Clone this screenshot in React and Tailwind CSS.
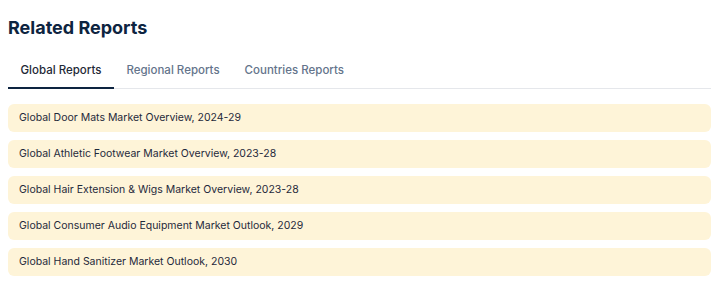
const reports = [
  "Global Door Mats Market Overview, 2024-29",
  "Global Athletic Footwear Market Overview, 2023-28",
  "Global Hair Extension & Wigs Market Overview, 2023-28",
  "Global Consumer Audio Equipment Market Outlook, 2029",
  "Global Hand Sanitizer Market Outlook, 2030",
];

const tabs = ["Global Reports", "Regional Reports", "Countries Reports"];

export default function App() {
  return (
    <div className="bg-white pl-2 pr-4 pt-4 font-['Inter','Liberation_Sans',sans-serif]">
      <h2 className="text-[18px] font-bold leading-6 text-[#0d2440]">Related Reports</h2>
      <div className="mt-[22px] flex border-b border-[#e5e7eb]">
        {tabs.map((t, i) => (
          <button
            key={t}
            className={
              i === 0
                ? "-mb-px border-b-2 border-[#0d2440] px-[12.5px] pb-[9px] text-[11.5px] font-medium leading-4 text-[#1f2937]"
                : "-mb-px border-b-2 border-transparent px-[12.5px] pb-[9px] text-[11.5px] font-medium leading-4 text-[#64748b]"
            }
          >
            {t}
          </button>
        ))}
      </div>
      <div className="mt-[15px] flex flex-col gap-2">
        {reports.map((r) => (
          <div key={r} className="flex h-7 items-center rounded-md bg-[#fef4d8] px-[11px] text-[10.5px] text-[#1e293b]">
            {r}
          </div>
        ))}
      </div>
    </div>
  );
}
